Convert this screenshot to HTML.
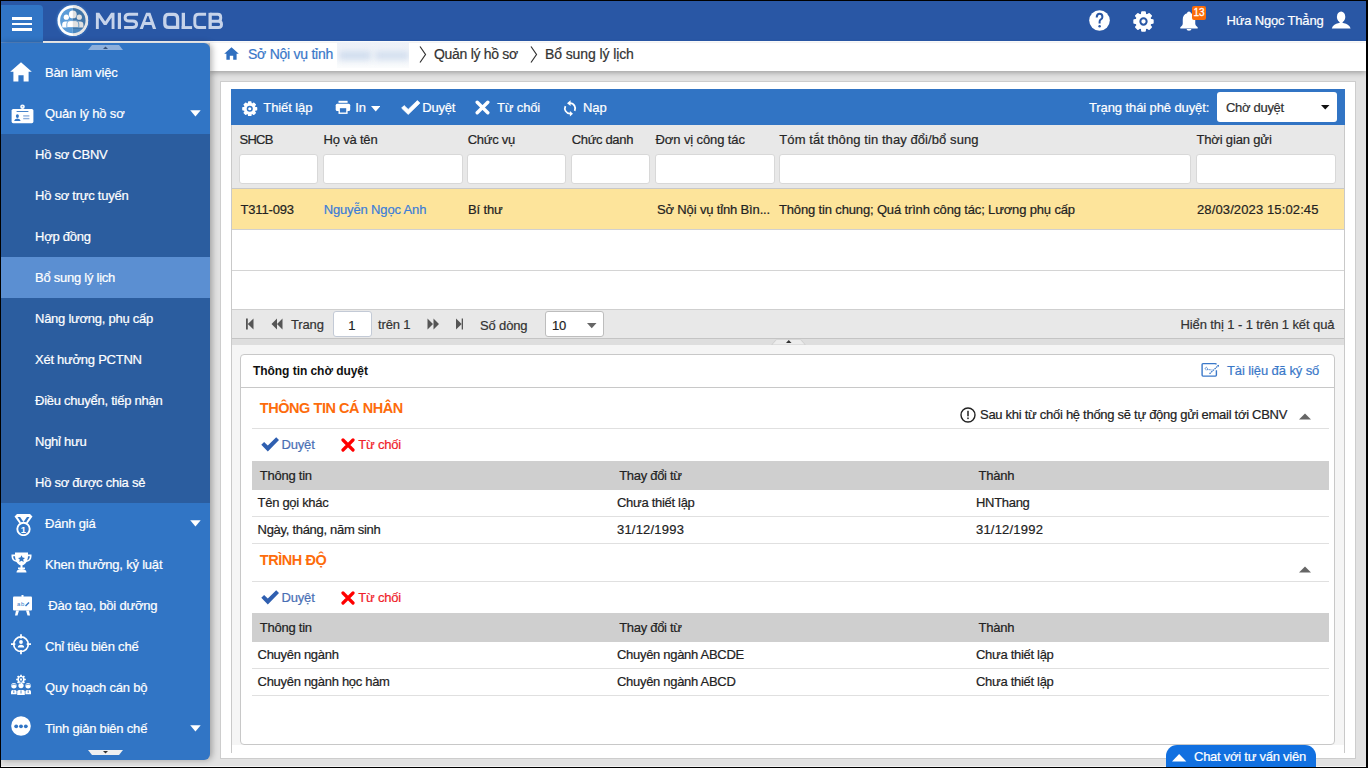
<!DOCTYPE html>
<html><head><meta charset="utf-8">
<style>
*{box-sizing:border-box;margin:0;padding:0}
html,body{width:1368px;height:768px;overflow:hidden;background:#000;font-family:"Liberation Sans",sans-serif;font-size:13px;color:#212121}
.a{position:absolute}
.t{position:absolute;white-space:nowrap;letter-spacing:-0.15px;-webkit-text-stroke:0.2px currentColor}
</style></head><body>
<div class="a" style="left:1px;top:1px;width:1365px;height:766px;background:#e2e2e2;"></div>
<div class="a" style="left:1px;top:766px;width:1365px;height:1px;background:#f4f4f4;"></div>
<div class="a" style="left:1px;top:1px;width:1365px;height:40px;background:#2957a5;"></div>
<div class="a" style="left:43px;top:41px;width:1323px;height:2px;background:#fff;"></div>
<div class="a" style="left:1px;top:5px;width:42px;height:38px;background:#3175c5;border-top-right-radius:4px"></div>
<div class="a" style="left:1px;top:42px;width:42px;height:1px;background:#5689cc;"></div>
<div class="a" style="left:11.5px;top:17.2px;width:20.0px;height:2.6999999999999993px;background:#fff;"></div>
<div class="a" style="left:11.5px;top:22.8px;width:20.0px;height:2.6999999999999993px;background:#fff;"></div>
<div class="a" style="left:11.5px;top:28.4px;width:20.0px;height:2.6999999999999993px;background:#fff;"></div>
<svg class="a" style="left:52px;top:0px;" width="42" height="42" viewBox="0 0 42 42">
<defs><clipPath id="lc"><circle cx="20.8" cy="20.6" r="12.7"/></clipPath><filter id="gl" x="-30%" y="-30%" width="160%" height="160%"><feGaussianBlur stdDeviation="1.2"/></filter></defs>
<circle cx="20.8" cy="20.6" r="16" fill="#4d8fd6" opacity="0.7" filter="url(#gl)"/>
<circle cx="20.8" cy="20.6" r="15.3" fill="#fff"/>
<path d="M20.8 5.3A15.3 15.3 0 0 1 20.8 35.9Z" fill="#e6e6e6"/>
<g clip-path="url(#lc)">
<rect x="0" y="0" width="20.8" height="42" fill="#5b9cd8"/>
<rect x="20.8" y="0" width="21.2" height="42" fill="#4a86bf"/>
<g fill="#fff">
<circle cx="20.8" cy="14.4" r="3.9"/>
<circle cx="14.3" cy="17.2" r="2.6"/>
<circle cx="27.3" cy="17.2" r="2.6"/>
<path d="M10.2 27.6V24.5Q10.2 21.6 13.3 21.6H16V27.6Z"/>
<path d="M31.4 27.6V24.5Q31.4 21.6 28.3 21.6H25.6V27.6Z"/>
<path d="M14.8 27.6V24Q14.8 20.6 18 20.6H23.6Q26.8 20.6 26.8 24V27.6Z" stroke="#5b9cd8" stroke-width="0.8"/>
</g>
<rect x="20.8" y="8" width="21" height="21" fill="#000" opacity="0.12"/>
</g></svg>
<svg class="a" style="left:0px;top:0px;" width="240" height="40" viewBox="0 0 240 40"><g fill="#c6d3ea"><path d="M95.9 29V12.8H99.3L105.2 21.4L111.1 12.8H114.5V29H111.6V17.6L106.5 25.1H103.9L98.8 17.6V29Z"/><rect x="117.8" y="12.8" width="3.2" height="16.2"/><path fill-rule="evenodd" d="M139.6 29L146.1 12.8H150.4L156.2 29H152.9L151.5 24.9H144.3L142.9 29Z M145.3 22H150.5L148.4 15.9H147.4Z"/><rect x="181.7" y="12.8" width="3.3" height="16.2"/><rect x="181.7" y="26.1" width="10.4" height="2.9"/><rect x="208.5" y="12.8" width="3.3" height="16.2"/></g><g fill="none" stroke="#c6d3ea" stroke-width="2.95"><path d="M138.1 14.3H129.1Q125.1 14.3 125.1 17.7Q125.1 21.05 129.1 21.05H132.6Q136.6 21.05 136.6 24.3Q136.6 27.55 132.6 27.55H124.1"/><path stroke-width="3.3" d="M177.6 27.4V18.4Q177.6 14.45 173.6 14.45H168.8Q164.8 14.45 164.8 18.4V23.4Q164.8 27.4 168.8 27.4H179.3"/><path d="M206.1 14.3H198.8Q194.8 14.3 194.8 18.3V23.5Q194.8 27.5 198.8 27.5H206.1"/><path d="M210 14.3H217.7Q220.7 14.3 220.7 17.3V18.2Q220.7 21.2 217.7 21.2H210 M210 21.2H218.5Q221.5 21.2 221.5 24.2V24.5Q221.5 27.5 218.5 27.5H210"/></g></svg>
<svg class="a" style="left:1089px;top:9.5px;" width="21" height="21" viewBox="0 0 21 21"><circle cx="10.5" cy="10.5" r="10.3" fill="#fff"/><path d="M7.7 7.4Q7.7 3.8 10.6 3.8Q13.4 3.8 13.4 6.9Q13.4 8.7 11.6 9.7Q10.6 10.3 10.6 11.8V13.4" fill="none" stroke="#2957a5" stroke-width="2"/><circle cx="10.6" cy="16.2" r="1.25" fill="#2957a5"/></svg>
<svg class="a" style="left:1133.35px;top:10.55px;" width="21" height="21" viewBox="0 0 21 21"><path fill="#fff" stroke="#fff" stroke-width="1.8" stroke-linejoin="round" d="M8.76 3.51 L9.03 1.22 L11.97 1.22 L12.24 3.51 L14.21 4.33 L16.03 2.90 L18.10 4.97 L16.67 6.79 L17.49 8.76 L19.78 9.03 L19.78 11.97 L17.49 12.24 L16.67 14.21 L18.10 16.03 L16.03 18.10 L14.21 16.67 L12.24 17.49 L11.97 19.78 L9.03 19.78 L8.76 17.49 L6.79 16.67 L4.97 18.10 L2.90 16.03 L4.33 14.21 L3.51 12.24 L1.22 11.97 L1.22 9.03 L3.51 8.76 L4.33 6.79 L2.90 4.97 L4.97 2.90 L6.79 4.33Z"/><circle cx="10.5" cy="10.5" r="3.15" fill="#fff" stroke="#2957a5" stroke-width="2"/></svg>
<svg class="a" style="left:1179.6px;top:11px;" width="18" height="21" viewBox="0 0 19 22.2"><path fill="#fff" d="M9.5 0.5c1.2 0 1.9 .8 2 1.8 3 .8 4.6 3.3 4.6 6.6v4.3c0 1.6.9 2.6 2.6 3.9v1.3H0.3v-1.3c1.7-1.3 2.6-2.3 2.6-3.9V8.9c0-3.3 1.6-5.8 4.6-6.6.1-1 .8-1.8 2-1.8z M6.9 19h5.2a2.6 1.9 0 0 1-5.2 0z"/></svg>
<div class="a" style="left:1192px;top:6px;width:14px;height:14px;background:#fb6c08;border-radius:2px"></div>
<div class="t" style="left:1193.40px;top:7.73px;font-size:10px;line-height:10px;color:#fff;letter-spacing:0px;-webkit-text-stroke:0.3px #fff;">13</div>
<div class="t" style="left:1226.50px;top:14.00px;font-size:13px;line-height:13px;color:#fff;letter-spacing:-0.18px;">Hứa Ngọc Thẳng</div>
<svg class="a" style="left:1331px;top:11px;" width="21" height="18" viewBox="0 0 21 18"><g fill="#fff"><ellipse cx="10.1" cy="5.9" rx="4.2" ry="5.5"/><rect x="8.6" y="9.5" width="3" height="3"/><path d="M0.8 17.5Q1.8 13.3 8 12.1H12.2Q18.4 13.3 19.6 17.5Z"/></g></svg>
<div class="a" style="left:210px;top:43px;width:1156px;height:28px;background:#fff;box-shadow:0 2px 5px rgba(0,0,0,0.28)"></div>
<div class="a" style="left:1px;top:43px;width:209px;height:717px;background:#3175c5;border-top-right-radius:6px;border-bottom-right-radius:6px;box-shadow:2px 0 6px rgba(0,0,0,0.3);overflow:hidden"></div>
<div class="a" style="left:1px;top:134px;width:209px;height:369px;background:#2b5d9f;"></div>
<div class="a" style="left:1px;top:257px;width:209px;height:41px;background:#5b8fd2;"></div>
<svg class="a" style="left:88px;top:45px;" width="35" height="5" viewBox="0 0 35 5"><path d="M4 0H31L35 5H0Z" fill="#8eb0dc"/><path d="M15 4H20L17.5 1.5Z" fill="#34507a"/></svg>
<svg class="a" style="left:88px;top:750px;" width="35" height="5" viewBox="0 0 35 5"><path d="M0 0H35L31 5H4Z" fill="#f0f0f0"/><path d="M15 1H20L17.5 3.5Z" fill="#333"/></svg>
<div class="t" style="left:45.00px;top:66.00px;font-size:13px;line-height:13px;color:#fff;">Bàn làm việc</div>
<div class="t" style="left:45.00px;top:107.00px;font-size:13px;line-height:13px;color:#fff;">Quản lý hồ sơ</div>
<div class="t" style="left:35.00px;top:148.00px;font-size:13px;line-height:13px;color:#fff;letter-spacing:-0.25px;">Hồ sơ CBNV</div>
<div class="t" style="left:35.00px;top:189.00px;font-size:13px;line-height:13px;color:#fff;letter-spacing:-0.25px;">Hồ sơ trực tuyến</div>
<div class="t" style="left:35.00px;top:230.00px;font-size:13px;line-height:13px;color:#fff;letter-spacing:-0.25px;">Hợp đồng</div>
<div class="t" style="left:35.00px;top:271.00px;font-size:13px;line-height:13px;color:#fff;letter-spacing:-0.25px;">Bổ sung lý lịch</div>
<div class="t" style="left:35.00px;top:312.00px;font-size:13px;line-height:13px;color:#fff;letter-spacing:-0.25px;">Nâng lương, phụ cấp</div>
<div class="t" style="left:35.00px;top:353.00px;font-size:13px;line-height:13px;color:#fff;letter-spacing:-0.25px;">Xét hưởng PCTNN</div>
<div class="t" style="left:35.00px;top:394.00px;font-size:13px;line-height:13px;color:#fff;letter-spacing:-0.25px;">Điều chuyển, tiếp nhận</div>
<div class="t" style="left:35.00px;top:435.00px;font-size:13px;line-height:13px;color:#fff;letter-spacing:-0.25px;">Nghỉ hưu</div>
<div class="t" style="left:35.00px;top:476.00px;font-size:13px;line-height:13px;color:#fff;letter-spacing:-0.25px;">Hồ sơ được chia sẻ</div>
<div class="t" style="left:45.00px;top:517.00px;font-size:13px;line-height:13px;color:#fff;letter-spacing:-0.2px;">Đánh giá</div>
<div class="t" style="left:45.00px;top:558.00px;font-size:13px;line-height:13px;color:#fff;letter-spacing:-0.2px;">Khen thưởng, kỷ luật</div>
<div class="t" style="left:48.30px;top:599.00px;font-size:13px;line-height:13px;color:#fff;letter-spacing:-0.2px;">Đào tạo, bồi dưỡng</div>
<div class="t" style="left:45.00px;top:640.00px;font-size:13px;line-height:13px;color:#fff;letter-spacing:-0.2px;">Chỉ tiêu biên chế</div>
<div class="t" style="left:45.00px;top:681.00px;font-size:13px;line-height:13px;color:#fff;letter-spacing:-0.2px;">Quy hoạch cán bộ</div>
<div class="t" style="left:45.00px;top:722.00px;font-size:13px;line-height:13px;color:#fff;letter-spacing:-0.2px;">Tinh giản biên chế</div>
<svg class="a" style="left:189.5px;top:110.3px;" width="11" height="7" viewBox="0 0 11 7"><path d="M0.2 0.2H10.7L5.45 6.5Z" fill="#fff"/></svg>
<svg class="a" style="left:189.5px;top:520.3px;" width="11" height="7" viewBox="0 0 11 7"><path d="M0.2 0.2H10.7L5.45 6.5Z" fill="#fff"/></svg>
<svg class="a" style="left:189.5px;top:725.3px;" width="11" height="7" viewBox="0 0 11 7"><path d="M0.2 0.2H10.7L5.45 6.5Z" fill="#fff"/></svg>
<svg class="a" style="left:10px;top:61.5px;" width="22" height="20" viewBox="0 0 22 20"><path fill="#fff" d="M11 0.3L21.8 9.8H18.6V19.5H13.6V13.2H8.4V19.5H3.4V9.8H0.2Z"/></svg>
<svg class="a" style="left:10.5px;top:104px;" width="23" height="20" viewBox="0 0 23 20"><rect x="0.6" y="4.9" width="21.8" height="14.3" rx="1.6" fill="#fff"/><circle cx="11.5" cy="2.7" r="2.3" fill="#fff"/><circle cx="11.5" cy="2.6" r="0.8" fill="#8fb0dd"/><rect x="5.6" y="7.1" width="11.8" height="0.9" fill="#3175c5"/><ellipse cx="6.4" cy="12.1" rx="1.5" ry="1.9" fill="#3175c5"/><path d="M3.1 16.9Q3.6 14.4 6.4 14.4T9.7 16.9Z" fill="#3175c5"/><rect x="12.2" y="11.2" width="6.2" height="1.4" fill="#8fb0dd"/><rect x="12.2" y="13.9" width="6.2" height="1.4" fill="#8fb0dd"/></svg>
<svg class="a" style="left:13.5px;top:513.5px;" width="19" height="22" viewBox="0 0 19 22"><path fill="#fff" d="M0.5 2.5L3 0H16L18.5 2.5L13.5 9.5L12 8.5L15.5 3H3.5L7 8.5L5.5 9.5Z"/><path fill="#fff" d="M4.5 0.8H14.5L9.5 8Z"/><circle cx="9.5" cy="15" r="6.2" fill="none" stroke="#fff" stroke-width="1.9"/><text x="9.5" y="18.6" text-anchor="middle" font-family="Liberation Sans" font-weight="700" font-size="9.5" fill="#fff">1</text></svg>
<svg class="a" style="left:10.5px;top:552px;" width="21" height="21" viewBox="0 0 21 21"><path fill="#fff" d="M4 0.5H17V2.5H20.5V4.5C20.5 7.5 18.5 9.5 15.5 10C14.5 12 12.5 13 11.5 13.3V15.5H14V17H7V15.5H9.5V13.3C8.5 13 6.5 12 5.5 10C2.5 9.5 .5 7.5 .5 4.5V2.5H4Z M2.2 4.3V4.7C2.2 6.6 3.5 7.9 4.8 8.3 4.3 7 4 5.6 4 4.3Z M18.8 4.3H17C17 5.6 16.7 7 16.2 8.3 17.5 7.9 18.8 6.6 18.8 4.7Z"/><path fill="#3175c5" d="M10.5 3.3L11.6 5.6 14 5.9 12.2 7.5 12.7 9.9 10.5 8.7 8.3 9.9 8.8 7.5 7 5.9 9.4 5.6Z"/><path fill="#fff" d="M5.5 20.5C5.5 18.3 7 17 10.5 17S15.5 18.3 15.5 20.5Z"/></svg>
<svg class="a" style="left:12.5px;top:595px;" width="19" height="21" viewBox="0 0 19 21"><rect x="0" y="1.5" width="19" height="14" rx="1" fill="#fff"/><rect x="8.5" y="0" width="2" height="2" fill="#fff"/><path fill="#fff" d="M3 15.5H6L4.5 20.5H2Z M13 15.5H16L17 20.5H14.5Z"/><text x="4" y="11" font-family="Liberation Sans" font-size="6" fill="#3175c5">a</text><text x="8" y="11" font-family="Liberation Sans" font-size="6" fill="#3175c5">b</text><path d="M12.5 11L16 7.5" stroke="#3175c5" stroke-width="1.4"/></svg>
<svg class="a" style="left:11px;top:634px;" width="20" height="20.5" viewBox="0 0 20 20.5"><circle cx="10" cy="10.2" r="7.3" fill="none" stroke="#fff" stroke-width="1.7"/><path d="M10 0.2V4.5 M10 16V20.3 M0 10.2H4.3 M15.7 10.2H20" stroke="#fff" stroke-width="1.8"/><circle cx="10" cy="8" r="1.9" fill="#fff"/><path d="M6.8 13.5Q7 10.7 10 10.7T13.2 13.5Z" fill="#fff"/></svg>
<svg class="a" style="left:8px;top:672px;" width="26" height="26" viewBox="0 0 26 26"><path fill="#fff" d="M12.14 3.90 L12.14 2.68 L13.86 2.68 L13.86 3.90 L14.93 4.35 L15.80 3.48 L17.02 4.70 L16.15 5.57 L16.60 6.64 L17.82 6.64 L17.82 8.36 L16.60 8.36 L16.15 9.43 L17.02 10.30 L15.80 11.52 L14.93 10.65 L13.86 11.10 L13.86 12.32 L12.14 12.32 L12.14 11.10 L11.07 10.65 L10.20 11.52 L8.98 10.30 L9.85 9.43 L9.40 8.36 L8.18 8.36 L8.18 6.64 L9.40 6.64 L9.85 5.57 L8.98 4.70 L10.20 3.48 L11.07 4.35Z"/><ellipse cx="13" cy="7.5" rx="2" ry="2.4" fill="#3175c5"/><ellipse cx="13" cy="7.5" rx="1" ry="1.3" fill="#fff"/><g fill="#fff"><circle cx="5.9" cy="13.8" r="2.7"/><circle cx="13" cy="13.6" r="2.6"/><circle cx="20.1" cy="13.8" r="2.7"/><path d="M3 22.2V19.6Q3 18 4.8 18H7Q8.6 18 8.6 19.6V22.2Z"/><path d="M9.2 23V19.6Q9.2 18 11 18H15Q16.8 18 16.8 19.6V23Z"/><path d="M17.4 22.2V19.6Q17.4 18 19.2 18H21.4Q23 18 23 19.6V22.2Z"/></g><path d="M3.6 13Q5.9 11.4 8.4 13 M17.6 13Q20.1 11.4 22.6 13 M12 11.2L13.5 10.5" stroke="#3175c5" stroke-width="0.7" fill="none"/><path d="M5.8 18.3V21 M13 18.3V21.5 M20.2 18.3V21" stroke="#3175c5" stroke-width="0.8"/></svg>
<svg class="a" style="left:11px;top:716px;" width="20" height="20" viewBox="0 0 20 20"><circle cx="10" cy="10" r="9.8" fill="#fff"/><circle cx="5.2" cy="10.3" r="1.9" fill="#3175c5"/><circle cx="10" cy="10.3" r="1.9" fill="#3175c5"/><circle cx="14.8" cy="10.3" r="1.9" fill="#3175c5"/></svg>
<svg class="a" style="left:223.5px;top:47px;" width="15" height="13" viewBox="0 0 15 13"><path fill="#2f6fc0" d="M7.5 0.3L14.8 6.8H12.6V12.8H9.2V8.8H5.8V12.8H2.4V6.8H0.2Z"/></svg>
<div class="t" style="left:248.00px;top:47.15px;font-size:14px;line-height:14px;color:#3a78c9;letter-spacing:-0.25px;">Sở Nội vụ tỉnh</div>
<div class="a" style="left:337px;top:42px;width:72px;height:26px;overflow:hidden;background:linear-gradient(#edf1f8,#f6f8fb 70%,#fbfcfd)"><div class="a" style="left:2px;top:9px;width:32px;height:9px;background:#cfdcee;filter:blur(3px)"></div><div class="a" style="left:38px;top:9px;width:34px;height:9px;background:#d3dfef;filter:blur(3px)"></div></div>
<svg class="a" style="left:419px;top:46px;" width="8" height="17" viewBox="0 0 8 17"><path d="M1 0.5L6.5 8.5L1 16.5" fill="none" stroke="#333" stroke-width="1.2"/></svg>
<div class="t" style="left:434.00px;top:47.15px;font-size:14px;line-height:14px;color:#333;letter-spacing:-0.3px;">Quản lý hồ sơ</div>
<svg class="a" style="left:530px;top:46px;" width="8" height="17" viewBox="0 0 8 17"><path d="M1 0.5L6.5 8.5L1 16.5" fill="none" stroke="#333" stroke-width="1.2"/></svg>
<div class="t" style="left:545.00px;top:47.15px;font-size:14px;line-height:14px;color:#333;letter-spacing:-0.1px;">Bổ sung lý lịch</div>
<div class="a" style="left:220px;top:81px;width:1136px;height:678px;background:#fff;border:1px solid #cdcdcd"></div>
<div class="a" style="left:231px;top:89px;width:1px;height:664px;background:#c9c9c9;"></div>
<div class="a" style="left:1344px;top:89px;width:1px;height:664px;background:#c9c9c9;"></div>
<div class="a" style="left:232px;top:339px;width:1112px;height:406px;background:#f5f5f5;"></div>
<div class="a" style="left:231px;top:89px;width:1114px;height:36px;background:#3174c4;"></div>
<svg class="a" style="left:242px;top:100.6px;" width="15.5" height="15.5" viewBox="0 0 21 21"><path fill="#fff" stroke="#fff" stroke-width="1.8" stroke-linejoin="round" d="M8.76 3.51 L9.03 1.22 L11.97 1.22 L12.24 3.51 L14.21 4.33 L16.03 2.90 L18.10 4.97 L16.67 6.79 L17.49 8.76 L19.78 9.03 L19.78 11.97 L17.49 12.24 L16.67 14.21 L18.10 16.03 L16.03 18.10 L14.21 16.67 L12.24 17.49 L11.97 19.78 L9.03 19.78 L8.76 17.49 L6.79 16.67 L4.97 18.10 L2.90 16.03 L4.33 14.21 L3.51 12.24 L1.22 11.97 L1.22 9.03 L3.51 8.76 L4.33 6.79 L2.90 4.97 L4.97 2.90 L6.79 4.33Z"/><circle cx="10.5" cy="10.5" r="3.15" fill="#fff" stroke="#3174c4" stroke-width="2"/></svg>
<div class="t" style="left:263.30px;top:101.20px;font-size:13px;line-height:13px;color:#fff;letter-spacing:-0.1px;">Thiết lập</div>
<svg class="a" style="left:334.5px;top:100px;" width="16" height="15" viewBox="0 0 16 15"><rect x="3.5" y="0.8" width="9.1" height="2" fill="#fff"/><rect x="0.7" y="3.8" width="14.5" height="7.2" rx="1.5" fill="#fff"/><rect x="3.5" y="7.3" width="9.1" height="6.6" fill="#fff"/><rect x="4.9" y="8.2" width="6.3" height="4.3" fill="#3174c4"/></svg>
<div class="t" style="left:355.30px;top:101.20px;font-size:13px;line-height:13px;color:#fff;">In</div>
<svg class="a" style="left:370.5px;top:105.5px;" width="9.5" height="6" viewBox="0 0 9.5 6"><path d="M0 0H9.5L4.75 5.5Z" fill="#fff"/></svg>
<svg class="a" style="left:401px;top:99.8px;" width="19.5" height="15" viewBox="0 0 19.5 15"><path fill="#fff" stroke="#fff" stroke-width="0.8" stroke-linejoin="round" d="M0.6 8.1L3.1 5.6 7.2 9.4 16.4 0.6 18.9 3.1 7.2 14.4Z"/></svg>
<div class="t" style="left:422.30px;top:101.20px;font-size:13px;line-height:13px;color:#fff;letter-spacing:-0.2px;">Duyệt</div>
<svg class="a" style="left:475px;top:100px;" width="15" height="15" viewBox="0 0 15 15"><path stroke="#fff" stroke-width="3.4" stroke-linecap="round" d="M2.2 2.2L12.8 12.8M12.8 2.2L2.2 12.8"/></svg>
<div class="t" style="left:497.00px;top:101.20px;font-size:13px;line-height:13px;color:#fff;letter-spacing:-0.15px;">Từ chối</div>
<svg class="a" style="left:562px;top:99px;" width="16" height="19" viewBox="0 0 16 19"><path d="M8.05 4.2A5.2 5.2 0 0 1 12.66 11.8 M3.42 7.04A5.2 5.2 0 0 0 8.05 14.6" fill="none" stroke="#fff" stroke-width="1.8"/><path d="M5 4.15L8.6 1.3V7Z M11 14.65L7.9 12V17.6Z" fill="#fff"/></svg>
<div class="t" style="left:583.00px;top:101.20px;font-size:13px;line-height:13px;color:#fff;letter-spacing:-0.1px;">Nạp</div>
<div class="t" style="left:1089.00px;top:101.20px;font-size:13px;line-height:13px;color:#fff;letter-spacing:-0.1px;">Trạng thái phê duyệt:</div>
<div class="a" style="left:1217px;top:92px;width:120px;height:30px;background:#fff;border-radius:3px"></div>
<div class="t" style="left:1226.00px;top:101.20px;font-size:13px;line-height:13px;color:#303030;letter-spacing:-0.3px;">Chờ duyệt</div>
<svg class="a" style="left:1321px;top:104.8px;" width="8.5" height="5" viewBox="0 0 8.5 5"><path d="M0 0H8.5L4.25 4.6Z" fill="#111"/></svg>
<div class="a" style="left:232px;top:125px;width:1112px;height:63px;background:#e8e8e8;"></div>
<div class="t" style="left:239.50px;top:132.80px;font-size:13px;line-height:13px;color:#262626;letter-spacing:-0.75px;">SHCB</div>
<div class="a" style="left:239px;top:154px;width:79px;height:30px;background:#fff;border:1px solid #d8d8d8;border-radius:3px"></div>
<div class="t" style="left:323.50px;top:132.80px;font-size:13px;line-height:13px;color:#262626;letter-spacing:-0.19px;">Họ và tên</div>
<div class="a" style="left:323px;top:154px;width:140px;height:30px;background:#fff;border:1px solid #d8d8d8;border-radius:3px"></div>
<div class="t" style="left:467.70px;top:132.80px;font-size:13px;line-height:13px;color:#262626;letter-spacing:-0.25px;">Chức vụ</div>
<div class="a" style="left:467px;top:154px;width:99px;height:30px;background:#fff;border:1px solid #d8d8d8;border-radius:3px"></div>
<div class="t" style="left:571.70px;top:132.80px;font-size:13px;line-height:13px;color:#262626;letter-spacing:-0.33px;">Chức danh</div>
<div class="a" style="left:571px;top:154px;width:79px;height:30px;background:#fff;border:1px solid #d8d8d8;border-radius:3px"></div>
<div class="t" style="left:655.60px;top:132.80px;font-size:13px;line-height:13px;color:#262626;letter-spacing:-0.11px;">Đơn vị công tác</div>
<div class="a" style="left:655px;top:154px;width:120px;height:30px;background:#fff;border:1px solid #d8d8d8;border-radius:3px"></div>
<div class="t" style="left:779.30px;top:132.80px;font-size:13px;line-height:13px;color:#262626;letter-spacing:0.08px;">Tóm tắt thông tin thay đổi/bổ sung</div>
<div class="a" style="left:779px;top:154px;width:412px;height:30px;background:#fff;border:1px solid #d8d8d8;border-radius:3px"></div>
<div class="t" style="left:1196.40px;top:132.80px;font-size:13px;line-height:13px;color:#262626;letter-spacing:-0.15px;">Thời gian gửi</div>
<div class="a" style="left:1196px;top:154px;width:140px;height:30px;background:#fff;border:1px solid #d8d8d8;border-radius:3px"></div>
<div class="a" style="left:232px;top:188px;width:1112px;height:42px;background:#fde49b;border-top:1px solid #c8c8c8;border-bottom:1px solid #d0d0d0"></div>
<div class="a" style="left:232px;top:230px;width:1112px;height:79px;background:#fff;"></div>
<div class="a" style="left:232px;top:270px;width:1112px;height:1px;background:#d4d4d4;"></div>
<div class="t" style="left:240.40px;top:202.80px;font-size:13px;line-height:13px;color:#222;letter-spacing:-0.15px;">T311-093</div>
<div class="t" style="left:323.70px;top:202.80px;font-size:13px;line-height:13px;color:#3b7dd8;letter-spacing:-0.15px;">Nguyễn Ngọc Anh</div>
<div class="t" style="left:468.00px;top:202.80px;font-size:13px;line-height:13px;color:#222;letter-spacing:-0.15px;">Bí thư</div>
<div class="t" style="left:657.00px;top:202.80px;font-size:13px;line-height:13px;color:#222;letter-spacing:-0.15px;">Sở Nội vụ tỉnh Bìn...</div>
<div class="t" style="left:779.00px;top:202.80px;font-size:13px;line-height:13px;color:#222;letter-spacing:-0.15px;">Thông tin chung; Quá trình công tác; Lương phụ cấp</div>
<div class="t" style="left:1197.00px;top:202.80px;font-size:13px;line-height:13px;color:#222;letter-spacing:0.12px;">28/03/2023 15:02:45</div>
<div class="a" style="left:232px;top:309px;width:1112px;height:30px;background:#e8e8e8;border-top:1px solid #cfcfcf;border-bottom:1px solid #c4c4c4"></div>
<svg class="a" style="left:246px;top:318px;" width="7.5" height="12" viewBox="0 0 7.5 12"><rect x="0" y="0.5" width="1.8" height="11" fill="#555"/><path d="M7.5 0.5V11.5L1.8 6Z" fill="#555"/></svg>
<svg class="a" style="left:271px;top:318px;" width="12" height="12" viewBox="0 0 12 12"><path d="M6 0.5V11.5L0.5 6Z M11.5 0.5V11.5L6 6Z" fill="#555"/></svg>
<div class="t" style="left:291.00px;top:318.00px;font-size:13px;line-height:13px;color:#333;letter-spacing:-0.15px;">Trang</div>
<div class="a" style="left:333px;top:311px;width:39px;height:26px;background:#fff;border:1px solid #c3cad6;border-radius:3px"></div>
<div class="t" style="left:348.30px;top:318.80px;font-size:13px;line-height:13px;color:#222;">1</div>
<div class="t" style="left:378.00px;top:318.00px;font-size:13px;line-height:13px;color:#333;letter-spacing:-0.15px;">trên 1</div>
<svg class="a" style="left:427px;top:318px;" width="12.5" height="12" viewBox="0 0 12.5 12"><path d="M0.5 0.5V11.5L6 6Z M6.5 0.5V11.5L12 6Z" fill="#555"/></svg>
<svg class="a" style="left:455.5px;top:318px;" width="7.5" height="12" viewBox="0 0 7.5 12"><path d="M0 0.5V11.5L5.7 6Z" fill="#555"/><rect x="5.7" y="0.5" width="1.8" height="11" fill="#555"/></svg>
<div class="t" style="left:480.00px;top:318.80px;font-size:13px;line-height:13px;color:#333;letter-spacing:-0.15px;">Số dòng</div>
<div class="a" style="left:545px;top:311px;width:59px;height:26px;background:#fff;border:1px solid #bdbdbd;border-radius:3px"></div>
<div class="t" style="left:552.00px;top:318.80px;font-size:13px;line-height:13px;color:#222;">10</div>
<svg class="a" style="left:586.7px;top:322.5px;" width="10" height="6" viewBox="0 0 10 6"><path d="M0 0H9.5L4.75 5.2Z" fill="#666"/></svg>
<div class="t" style="left:1180.50px;top:317.50px;font-size:13px;line-height:13px;color:#333;letter-spacing:-0.1px;">Hiển thị 1 - 1 trên 1 kết quả</div>
<div class="a" style="left:232px;top:339px;width:1112px;height:6px;background:#dedede;"></div>
<svg class="a" style="left:771px;top:339px;" width="35" height="6" viewBox="0 0 35 6"><path d="M0 6L5 0.5H30L35 6Z" fill="#d0d0d0"/><path d="M1.5 5.5L5.5 1H29.5L33.5 5.5Z" fill="#ececec"/><path d="M15 4H20.5L17.75 1Z" fill="#333"/></svg>
<div class="a" style="left:240px;top:354px;width:1095px;height:391px;background:#fff;border:1px solid #c8c8c8;border-radius:4px"></div>
<div class="a" style="left:241px;top:387px;width:1093px;height:1px;background:#c8c8c8;"></div>
<div class="t" style="left:253.00px;top:364.84px;font-size:12px;line-height:12px;color:#111;font-weight:700;-webkit-text-stroke:0;letter-spacing:-0.05px;">Thông tin chờ duyệt</div>
<svg class="a" style="left:1196px;top:358px;" width="28" height="24" viewBox="0 0 28 24"><path d="M20.4 12.3V17.1Q20.4 18.1 19.4 18.1H7Q6.1 18.1 6.1 17.1V6.6Q6.1 5.6 7 5.6H19.2Q19.9 5.6 20.5 6.4" fill="none" stroke="#3a78c9" stroke-width="1.4"/><path d="M13.5 15.8L22.6 7.3" fill="none" stroke="#3a78c9" stroke-width="1.2" stroke-dasharray="1.6 0.7"/><path d="M21 7.2L23 7.1 22.7 9Z" fill="#3a78c9"/><path d="M11.8 11.5Q9.2 12.6 9.2 10.6Q9.4 9 10.7 9.4Q11.8 10 11.4 11.5L16.5 12" fill="none" stroke="#3a78c9" stroke-width="0.9" stroke-dasharray="1 0.5"/></svg>
<div class="t" style="left:1227.00px;top:364.00px;font-size:13px;line-height:13px;color:#3a78c9;letter-spacing:-0.1px;">Tài liệu đã ký số</div>
<div class="t" style="left:259.80px;top:401.23px;font-size:14.5px;line-height:14.5px;color:#fd6c0c;font-weight:700;-webkit-text-stroke:0;letter-spacing:-0.45px;">THÔNG TIN CÁ NHÂN</div>
<div class="a" style="left:251.5px;top:428px;width:1077.0px;height:1px;background:#e0e0e0;"></div>
<svg class="a" style="left:261px;top:437.4px;" width="18" height="15" viewBox="0 0 18 15"><path fill="#2f5fb0" d="M0.3 7.8L3.1 5.1 6.8 8.6 15.2 0.3 18 3.1 6.8 14.4Z"/></svg>
<div class="t" style="left:281.60px;top:438.40px;font-size:13px;line-height:13px;color:#4a6fb5;letter-spacing:-0.2px;">Duyệt</div>
<svg class="a" style="left:340.5px;top:437.9px;" width="15" height="15" viewBox="0 0 15 15"><path stroke="#f00" stroke-width="3.2" stroke-linecap="round" d="M2 2L12 12M12 2L2 12"/></svg>
<div class="t" style="left:358.30px;top:438.40px;font-size:13px;line-height:13px;color:#f0202a;letter-spacing:-0.2px;">Từ chối</div>
<div class="a" style="left:251.5px;top:461px;width:1077.0px;height:29px;background:#cfcfcf;"></div>
<div class="t" style="left:259.80px;top:468.50px;font-size:13px;line-height:13px;color:#222;letter-spacing:-0.25px;">Thông tin</div>
<div class="t" style="left:619.20px;top:468.50px;font-size:13px;line-height:13px;color:#222;letter-spacing:-0.3px;">Thay đổi từ</div>
<div class="t" style="left:978.40px;top:468.50px;font-size:13px;line-height:13px;color:#222;letter-spacing:-0.2px;">Thành</div>
<div class="t" style="left:257.60px;top:495.50px;font-size:13px;line-height:13px;color:#222;letter-spacing:-0.3px;">Tên gọi khác</div>
<div class="t" style="left:617.00px;top:495.50px;font-size:13px;line-height:13px;color:#222;letter-spacing:-0.3px;">Chưa thiết lập</div>
<div class="t" style="left:976.00px;top:495.50px;font-size:13px;line-height:13px;color:#222;letter-spacing:-0.3px;">HNThang</div>
<div class="a" style="left:251.5px;top:516px;width:1077.0px;height:1px;background:#e0e0e0;"></div>
<div class="t" style="left:257.60px;top:522.50px;font-size:13px;line-height:13px;color:#222;letter-spacing:-0.3px;">Ngày, tháng, năm sinh</div>
<div class="t" style="left:617.00px;top:522.50px;font-size:13px;line-height:13px;color:#222;letter-spacing:0.2px;">31/12/1993</div>
<div class="t" style="left:976.00px;top:522.50px;font-size:13px;line-height:13px;color:#222;letter-spacing:0.2px;">31/12/1992</div>
<div class="a" style="left:251.5px;top:543px;width:1077.0px;height:1px;background:#e0e0e0;"></div>
<svg class="a" style="left:959.5px;top:406.5px;" width="16" height="16" viewBox="0 0 16 16"><circle cx="8" cy="8" r="7" fill="none" stroke="#222" stroke-width="1.4"/><rect x="7.25" y="3.8" width="1.5" height="5.5" fill="#222"/><rect x="7.25" y="10.5" width="1.5" height="1.6" fill="#222"/></svg>
<div class="t" style="left:980.00px;top:407.70px;font-size:13px;line-height:13px;color:#222;letter-spacing:-0.28px;">Sau khi từ chối hệ thống sẽ tự động gửi email tới CBNV</div>
<svg class="a" style="left:1298.5px;top:413px;" width="12" height="7" viewBox="0 0 12 7"><path d="M0 6.5H12L6 0.5Z" fill="#666"/></svg>
<div class="t" style="left:259.80px;top:553.23px;font-size:14.5px;line-height:14.5px;color:#fd6c0c;font-weight:700;-webkit-text-stroke:0;letter-spacing:-0.45px;">TRÌNH ĐỘ</div>
<div class="a" style="left:251.5px;top:581px;width:1077.0px;height:1px;background:#e0e0e0;"></div>
<svg class="a" style="left:261px;top:590px;" width="18" height="15" viewBox="0 0 18 15"><path fill="#2f5fb0" d="M0.3 7.8L3.1 5.1 6.8 8.6 15.2 0.3 18 3.1 6.8 14.4Z"/></svg>
<div class="t" style="left:281.60px;top:591.00px;font-size:13px;line-height:13px;color:#4a6fb5;letter-spacing:-0.2px;">Duyệt</div>
<svg class="a" style="left:340.5px;top:590.5px;" width="15" height="15" viewBox="0 0 15 15"><path stroke="#f00" stroke-width="3.2" stroke-linecap="round" d="M2 2L12 12M12 2L2 12"/></svg>
<div class="t" style="left:358.30px;top:591.00px;font-size:13px;line-height:13px;color:#f0202a;letter-spacing:-0.2px;">Từ chối</div>
<div class="a" style="left:251.5px;top:613px;width:1077.0px;height:29px;background:#cfcfcf;"></div>
<div class="t" style="left:259.80px;top:620.50px;font-size:13px;line-height:13px;color:#222;letter-spacing:-0.25px;">Thông tin</div>
<div class="t" style="left:619.20px;top:620.50px;font-size:13px;line-height:13px;color:#222;letter-spacing:-0.3px;">Thay đổi từ</div>
<div class="t" style="left:978.40px;top:620.50px;font-size:13px;line-height:13px;color:#222;letter-spacing:-0.2px;">Thành</div>
<div class="t" style="left:257.60px;top:647.50px;font-size:13px;line-height:13px;color:#222;letter-spacing:-0.3px;">Chuyên ngành</div>
<div class="t" style="left:617.00px;top:647.50px;font-size:13px;line-height:13px;color:#222;letter-spacing:-0.3px;">Chuyên ngành ABCDE</div>
<div class="t" style="left:976.00px;top:647.50px;font-size:13px;line-height:13px;color:#222;letter-spacing:-0.3px;">Chưa thiết lập</div>
<div class="a" style="left:251.5px;top:668px;width:1077.0px;height:1px;background:#e0e0e0;"></div>
<div class="t" style="left:257.60px;top:674.50px;font-size:13px;line-height:13px;color:#222;letter-spacing:-0.3px;">Chuyên ngành học hàm</div>
<div class="t" style="left:617.00px;top:674.50px;font-size:13px;line-height:13px;color:#222;letter-spacing:-0.3px;">Chuyên ngành ABCD</div>
<div class="t" style="left:976.00px;top:674.50px;font-size:13px;line-height:13px;color:#222;letter-spacing:-0.3px;">Chưa thiết lập</div>
<div class="a" style="left:251.5px;top:695px;width:1077.0px;height:1px;background:#e0e0e0;"></div>
<svg class="a" style="left:1298.5px;top:566px;" width="12" height="7" viewBox="0 0 12 7"><path d="M0 6.5H12L6 0.5Z" fill="#666"/></svg>
<div class="a" style="left:1166px;top:745px;width:150px;height:22px;background:#1170e0;border-radius:11px 11px 0 0"></div>
<svg class="a" style="left:1171.7px;top:754px;" width="15" height="8" viewBox="0 0 15 8"><path d="M0 7.6H14.3L7.15 0Z" fill="#fff"/></svg>
<div class="t" style="left:1194.00px;top:750.00px;font-size:13px;line-height:13px;color:#fff;letter-spacing:-0.25px;">Chat với tư vấn viên</div></body></html>
